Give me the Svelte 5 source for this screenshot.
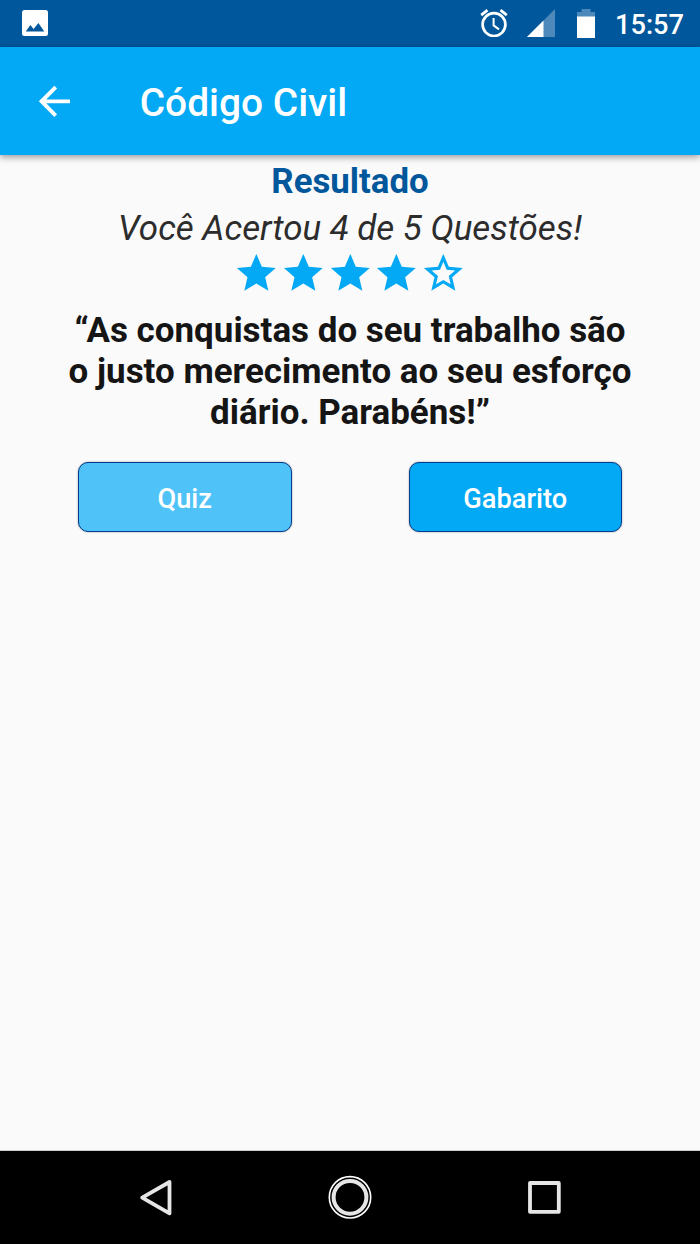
<script lang="ts">
  export let title: string = 'Código Civil';
  export let correct: number = 4;
  export let total: number = 5;
  export let onBack: () => void = () => {};
  export let onQuiz: () => void = () => {};
  export let onAnswers: () => void = () => {};

  const STAR = 'M12 17.27 18.18 21l-1.64-7.03L22 9.24l-7.19-.61L12 2 9.19 8.63 2 9.24l5.46 4.73L5.82 21z';
  const STAR_BORDER =
    'M22 9.24l-7.19-.62L12 2 9.19 8.63 2 9.24l5.46 4.73L5.82 21 12 17.27 18.18 21l-1.63-7.03L22 9.24zM12 15.4l-3.76 2.27 1-4.28-3.32-2.88 4.38-.38L12 6.1l1.71 4.04 4.38.38-3.32 2.88 1 4.28L12 15.4z';

  $: stars = Array.from({ length: total }, (_, i) => i < correct);
</script>

<div class="screen">
  <div class="status-bar">
    <svg class="picture" viewBox="0 0 26 26" aria-hidden="true">
      <path
        fill="#fff"
        fill-rule="evenodd"
        d="M2.5 0h21a2.5 2.5 0 0 1 2.5 2.5v21a2.5 2.5 0 0 1-2.5 2.5h-21a2.5 2.5 0 0 1-2.5-2.5v-21a2.5 2.5 0 0 1 2.5-2.5zM3.7 21.4h18.6L16.4 13l-4.8 6-3.2-4z"
      />
    </svg>
    <div class="status-icons">
      <svg class="alarm" viewBox="0 0 28 28" fill="none" stroke="#fff" aria-hidden="true">
        <circle cx="14" cy="15.6" r="11.4" stroke-width="2.7" />
        <path d="M13.6 9v7.4l5.4 4" stroke-width="2" />
        <path d="M1.2 6.2 7.5 1.2M26.8 6.2 20.5 1.2" stroke-width="2.8" />
      </svg>
      <svg class="signal" viewBox="0 0 28 28" aria-hidden="true">
        <path d="M28 0v28H0z" fill="#4d89ba" />
        <path d="M16.5 11.5V28H0z" fill="#fff" />
      </svg>
      <svg class="battery" viewBox="0 0 18 29" aria-hidden="true">
        <path d="M0 3h4.5V0h9v3H18v5H0z" fill="#4d89ba" />
        <path d="M0 7.5h18V29H0z" fill="#fff" />
      </svg>
      <span class="clock">15:57</span>
    </div>
  </div>

  <header class="app-bar">
    <button type="button" class="back" aria-label="Voltar" on:click={() => onBack()}>
      <svg viewBox="0 0 24 24" aria-hidden="true">
        <path fill="#fff" d="M20 11H7.83l5.59-5.59L12 4l-8 8 8 8 1.41-1.41L7.83 13H20v-2z" />
      </svg>
    </button>
    <h1>{title}</h1>
  </header>

  <main>
    <h2>Resultado</h2>
    <p class="score">Você Acertou {correct} de {total} Questões!</p>
    <div class="stars">
      {#each stars as filled}
        <svg viewBox="0 0 24 24" aria-hidden="true">
          <path d={filled ? STAR : STAR_BORDER} />
        </svg>
      {/each}
    </div>
    <p class="quote">“As conquistas do seu trabalho são o justo merecimento ao seu esforço diário. Parabéns!”</p>
    <div class="actions">
      <button type="button" class="action light" on:click={() => onQuiz()}>Quiz</button>
      <button type="button" class="action" on:click={() => onAnswers()}>Gabarito</button>
    </div>
  </main>

  <nav class="nav-bar">
    <svg viewBox="0 0 46 46" aria-hidden="true">
      <path d="M36.5 8v31.4L9.2 23.7z" />
    </svg>
    <svg viewBox="0 0 46 46" aria-hidden="true">
      <circle cx="23" cy="23.3" r="20.7" stroke="#fff" stroke-width="1.6" />
      <circle cx="23" cy="23.3" r="16.4" stroke-width="4" />
    </svg>
    <svg viewBox="0 0 46 46" aria-hidden="true">
      <rect x="8" y="9" width="28.8" height="28.8" />
    </svg>
  </nav>
</div>

<style>
  :global(body) {
    margin: 0;
  }

  .screen {
    display: flex;
    flex-direction: column;
    width: 700px;
    height: 1244px;
    overflow: hidden;
    background: #fafafa;
    font-family: Roboto, sans-serif;
  }

  h1,
  h2,
  p {
    margin: 0;
  }

  svg {
    display: block;
    flex: none;
  }

  .status-bar {
    display: flex;
    justify-content: space-between;
    align-items: center;
    height: 46.5px;
    padding: 0 16px 0 22px;
    background: #01579b;
  }

  .picture {
    width: 26px;
    height: 26px;
  }

  .status-icons {
    display: flex;
    align-items: center;
  }

  .alarm {
    width: 28px;
    height: 28px;
    margin-right: 19px;
  }

  .signal {
    width: 28px;
    height: 28px;
    margin-right: 22px;
  }

  .battery {
    width: 18px;
    height: 29px;
    margin-right: 20px;
  }

  .clock {
    padding-top: 4px;
    color: #fff;
    font-size: 27.2px;
    font-weight: 500;
    line-height: 42px;
  }

  .app-bar {
    position: relative;
    display: flex;
    align-items: center;
    height: 108.5px;
    padding-left: 31px;
    background: #03a9f4;
    box-shadow: 0 2px 7px rgba(0, 0, 0, 0.4);
  }

  .back {
    padding: 1px 0 0;
    border: none;
    background: none;
    cursor: pointer;
  }

  .back svg {
    width: 46.7px;
    height: 46.7px;
  }

  h1 {
    margin-left: 62px;
    padding-top: 4px;
    color: #fff;
    font-size: 38.9px;
    font-weight: 500;
    line-height: 46px;
  }

  main {
    flex: 1;
    display: flex;
    flex-direction: column;
    align-items: center;
    padding-top: 6px;
    text-align: center;
  }

  h2 {
    color: #01579b;
    font-size: 34.8px;
    font-weight: 700;
    line-height: 41px;
  }

  .score {
    margin-top: 6px;
    color: #2c2c2c;
    font-size: 34.9px;
    font-style: italic;
    font-weight: 400;
    line-height: 41px;
  }

  .stars {
    display: flex;
    margin-top: 1px;
  }

  .stars svg {
    width: 46.67px;
    height: 46.67px;
    fill: #03a9f4;
  }

  .quote {
    width: 572px;
    margin-top: 13px;
    color: #151515;
    font-size: 34.95px;
    font-weight: 700;
    line-height: 41px;
  }

  .actions {
    display: flex;
    gap: 117px;
    margin-top: 29.8px;
  }

  .action {
    box-sizing: border-box;
    width: 213.5px;
    height: 69.5px;
    padding: 3px 0 0;
    border: 1.5px solid #003c8f;
    border-radius: 10px;
    background: #03a9f4;
    box-shadow: 0 0 2px rgba(0, 0, 0, 0.4);
    color: #fff;
    font-family: inherit;
    font-size: 27.2px;
    font-weight: 500;
    cursor: pointer;
  }

  .action.light {
    background: #4fc3f7;
  }

  .nav-bar {
    display: flex;
    justify-content: center;
    align-items: center;
    gap: 148.5px;
    height: 94px;
    padding-bottom: 1px;
    border-top: 1px solid #c8cccc;
    box-sizing: border-box;
    background: #000;
  }

  .nav-bar svg {
    width: 46px;
    height: 46px;
    fill: none;
    stroke: #e6e6e6;
    stroke-width: 3.8;
    stroke-linejoin: round;
  }
</style>
